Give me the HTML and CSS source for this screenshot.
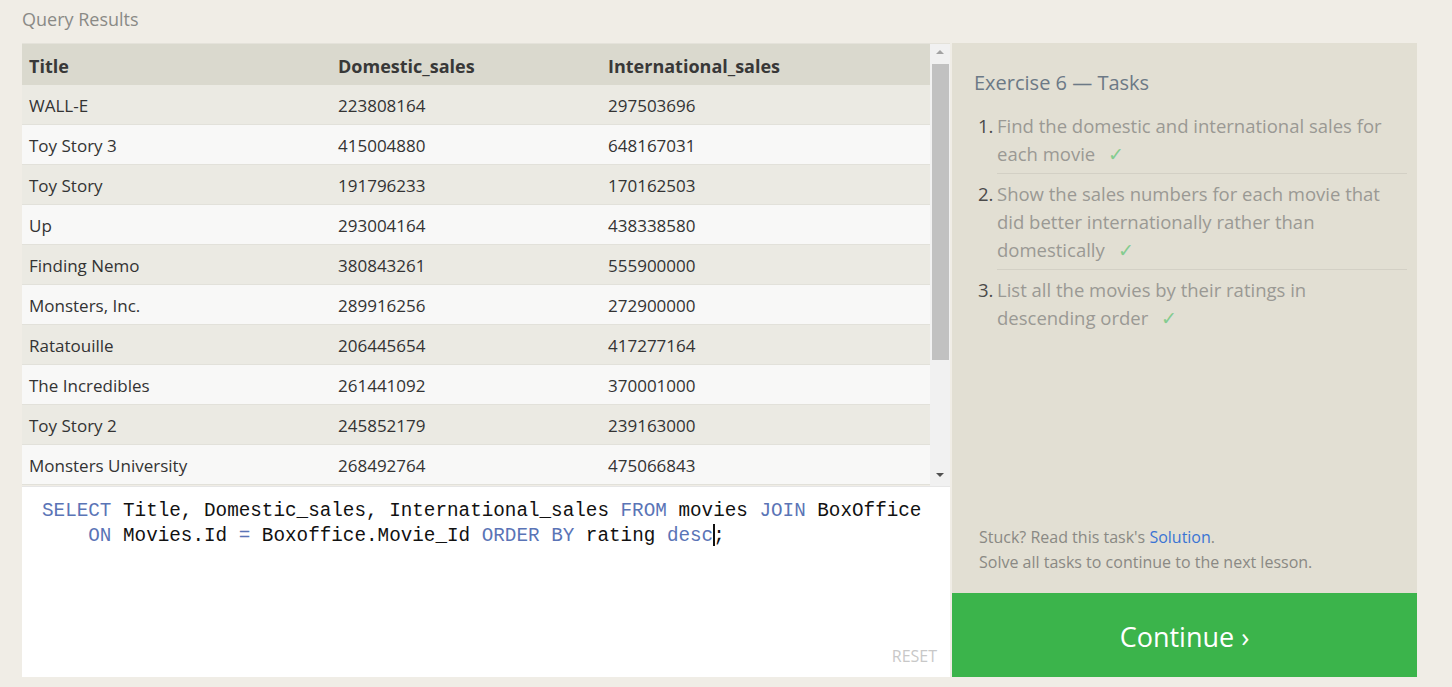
FILE: index.html
```html
<!DOCTYPE html>
<html>
<head>
<meta charset="utf-8">
<link rel="stylesheet" href="styles.css">
</head>
<body>
<div class="page">
  <div class="qr-title">Query Results</div>
  <div class="main">
    <div class="left">
      <div class="results">
        <div class="table-wrap">
          <table class="grid">
            <colgroup><col class="c1"><col class="c2"><col class="c3"></colgroup>
            <thead><tr><th>Title</th><th>Domestic_sales</th><th>International_sales</th></tr></thead>
            <tbody>
              <tr><td>WALL-E</td><td>223808164</td><td>297503696</td></tr>
              <tr><td>Toy Story 3</td><td>415004880</td><td>648167031</td></tr>
              <tr><td>Toy Story</td><td>191796233</td><td>170162503</td></tr>
              <tr><td>Up</td><td>293004164</td><td>438338580</td></tr>
              <tr><td>Finding Nemo</td><td>380843261</td><td>555900000</td></tr>
              <tr><td>Monsters, Inc.</td><td>289916256</td><td>272900000</td></tr>
              <tr><td>Ratatouille</td><td>206445654</td><td>417277164</td></tr>
              <tr><td>The Incredibles</td><td>261441092</td><td>370001000</td></tr>
              <tr><td>Toy Story 2</td><td>245852179</td><td>239163000</td></tr>
              <tr><td>Monsters University</td><td>268492764</td><td>475066843</td></tr>
            </tbody>
          </table>
        </div>
        <div class="scrollbar">
          <div class="arrow up"></div>
          <div class="track"><div class="thumb"></div></div>
          <div class="arrow down"></div>
        </div>
      </div>
      <div class="editor">
        <div class="code"><div class="line"><span class="kw">SELECT</span> Title, Domestic_sales, International_sales <span class="kw">FROM</span> movies <span class="kw">JOIN</span> BoxOffice</div><div class="line indent"><span class="kw">ON</span> Movies.Id <span class="kw">=</span> Boxoffice.Movie_Id <span class="kw">ORDER BY</span> rating <span class="kw">desc</span><span class="cursor"></span>;</div></div>
        <div class="reset">RESET</div>
      </div>
    </div>
    <div class="right">
      <div class="tasks">
        <div class="tasks-title">Exercise 6 — Tasks</div>
        <ol class="task-list">
          <li><span class="num">1.</span><span class="txt">Find the domestic and international sales for each movie<span class="check">✓</span></span></li>
          <li><span class="num">2.</span><span class="txt">Show the sales numbers for each movie that did better internationally rather than domestically<span class="check">✓</span></span></li>
          <li><span class="num">3.</span><span class="txt">List all the movies by their ratings in descending order<span class="check">✓</span></span></li>
        </ol>
        <div class="spacer"></div>
        <div class="hint">Stuck? Read this task's <a class="link">Solution</a>.<br>Solve all tasks to continue to the next lesson.</div>
      </div>
      <div class="continue">Continue ›</div>
    </div>
  </div>
</div>
</body>
</html>
```
FILE: styles.css
```css
html, body {
  margin: 0;
  padding: 0;
}
body {
  background: #f0ede6;
  font-family: "Open Sans", "Noto Sans", sans-serif;
  width: 1452px;
  height: 687px;
  overflow: hidden;
}
.page {
  padding: 0 0 0 22px;
}
.qr-title {
  height: 43px;
  box-sizing: border-box;
  padding-top: 6px;
  font-size: 18px;
  color: #8a8a86;
  line-height: 26px;
}
.main {
  display: flex;
  gap: 2px;
}
.left {
  width: 928px;
  display: flex;
  flex-direction: column;
}
.results {
  height: 443px;
  display: flex;
  overflow: hidden;
  border-top: 1px solid #e4e2da;
  box-sizing: border-box;
}
.table-wrap {
  width: 908px;
  overflow: hidden;
}
.grid {
  width: 908px;
  border-collapse: separate;
  border-spacing: 0;
  table-layout: fixed;
  font-size: 17px;
  color: #333;
}
.c1 { width: 309px; }
.c2 { width: 270px; }
.grid th {
  background: #dad9ce;
  text-align: left;
  font-weight: 700;
  height: 39px;
  padding: 2px 0 0 7px;
  font-size: 18px;
  color: #383838;
}
.grid td {
  height: 39px;
  padding: 1px 0 0 7px;
  box-shadow: inset 0 -1px 0 #e2e1da;
}
.grid tbody tr:nth-child(odd) td { background: #ebeae3; }
.grid tbody tr:nth-child(even) td { background: #f8f8f7; }
.scrollbar {
  width: 20px;
  background: #f1f1f1;
  display: flex;
  flex-direction: column;
  align-items: center;
}
.arrow {
  height: 20px;
  width: 20px;
  position: relative;
}
.arrow::after {
  content: "";
  position: absolute;
  left: 6px;
  border-left: 4px solid transparent;
  border-right: 4px solid transparent;
}
.arrow.up::after {
  top: 6px;
  border-bottom: 4px solid #a3a3a3;
}
.arrow.down::after {
  top: 7px;
  border-top: 4px solid #505050;
}
.track {
  flex: 1;
  width: 17px;
}
.thumb {
  height: 296px;
  background: #c1c1c1;
}
.editor {
  height: 191px;
  background: #fff;
  display: flex;
  flex-direction: column;
  border-top: 1px solid #e6e6e6;
  box-sizing: border-box;
}
.code {
  flex: 1;
  padding: 12px 0 0 20px;
  font-family: "Liberation Mono", "DejaVu Sans Mono", monospace;
  font-size: 19.3px;
  line-height: 25px;
  color: #111;
}
.line {
  white-space: pre;
}
.indent {
  padding-left: 4ch;
}
.kw { color: #5a74b6; }
.cursor {
  display: inline-block;
  width: 2px;
  height: 22px;
  background: #111;
  vertical-align: -5px;
  margin-right: -2px;
}
.reset {
  align-self: flex-end;
  padding: 0 13px 10px 0;
  font-size: 16px;
  color: #c8c8c8;
  line-height: 22px;
}
.right {
  width: 465px;
  display: flex;
  flex-direction: column;
}
.tasks {
  height: 550px;
  background: #e2dfd3;
  display: flex;
  flex-direction: column;
  padding: 26px 10px 0 22px;
  box-sizing: border-box;
}
.tasks-title {
  font-size: 20px;
  color: #6c7986;
  line-height: 28px;
  margin-bottom: 15px;
}
.task-list {
  list-style: none;
  margin: 0;
  padding: 0;
}
.task-list li {
  display: flex;
  font-size: 18.5px;
  line-height: 28px;
  color: #9a9994;
  padding-bottom: 5px;
  margin-bottom: 7px;
  position: relative;
}
.task-list li + li::before {
  content: "";
  position: absolute;
  top: -7px;
  left: 23px;
  right: 0;
  border-top: 1px solid #d3d0c5;
}
.num {
  width: 23px;
  flex: none;
  color: #4a4a4a;
  padding-left: 4px;
  box-sizing: border-box;
}
.txt { flex: 1; padding-right: 20px; }
.check {
  display: inline-block;
  color: #84cc8f;
  margin-left: 13px;
}
.spacer { flex: 1; }
.hint {
  padding: 0 0 18px 5px;
  font-size: 16px;
  line-height: 25px;
  color: #8a8984;
}
.link { color: #3a74d4; }
.continue {
  height: 84px;
  background: #3bb44b;
  color: #fff;
  font-size: 27px;
  display: flex;
  align-items: center;
  justify-content: center;
  padding-top: 2px;
  box-sizing: border-box;
}
```
